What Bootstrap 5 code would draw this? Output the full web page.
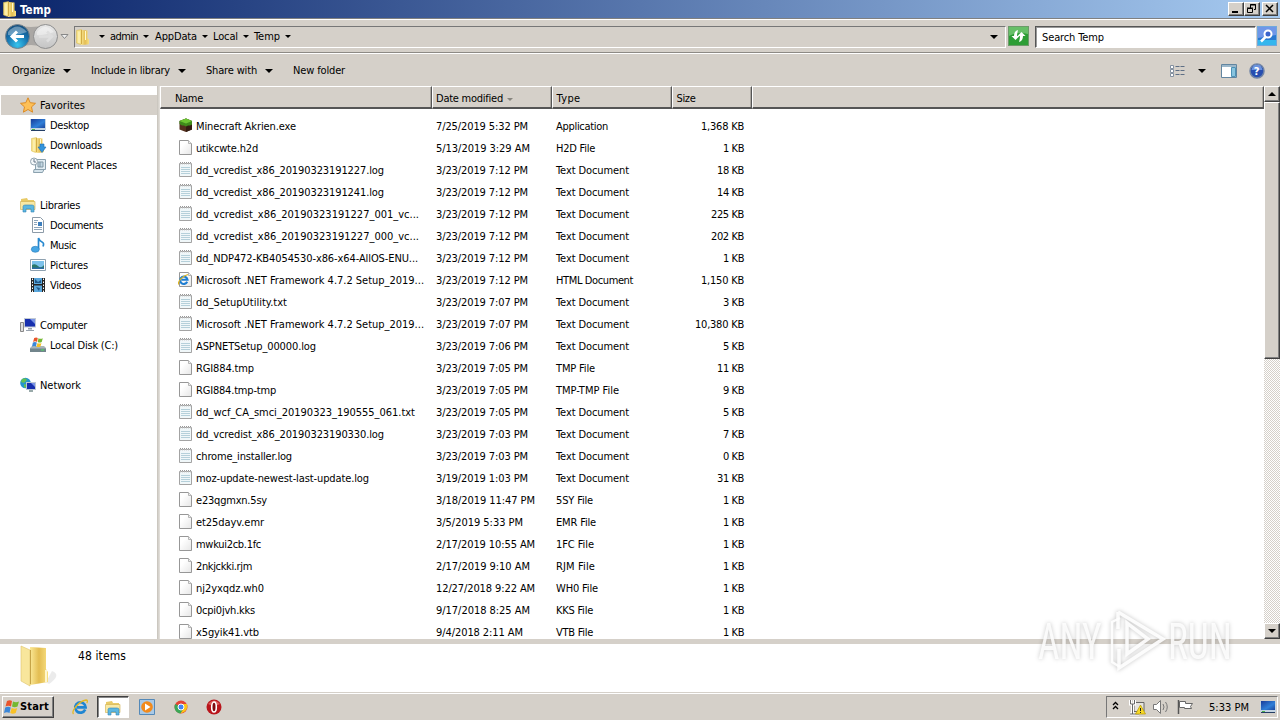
<!DOCTYPE html>
<html lang="en">
<head>
<meta charset="utf-8">
<title>Temp</title>
<link href="https://cdn.jsdelivr.net/npm/bootstrap@5.3.0/dist/css/bootstrap.min.css" rel="stylesheet">
<style>
:root{--face:#d5d0c9;--dark:#404040;--shade:#808080}
body{width:1280px;height:720px;overflow:hidden;background:var(--face);color:#000;font:11px/16px "DejaVu Sans Condensed","DejaVu Sans",sans-serif;font-stretch:condensed}
svg{display:block;flex:none;overflow:visible}
span{white-space:nowrap}
.titlebar{height:18px;background:linear-gradient(90deg,#0a246a,#a6caf0);color:#fff;padding:0 2px 0 2px}
.raised{background:var(--face);border:1px solid;border-color:#fff var(--dark) var(--dark) #fff;box-shadow:inset -1px -1px var(--shade)}
.winbtn{width:16px;height:14px}
.addressrow{height:36px;border-top:1px solid #808080;border-bottom:1px solid #fff;box-shadow:inset 0 1px #fff,inset 0 -1px #8d8a85;padding:7px 0 0 5px}
.sunk{height:22px;border:1px solid;border-color:#777 #fff #fff #777}
.searchbox{width:221px;background:#fff;border-color:#555 #fff #fff #555;box-shadow:inset 1px 1px #999}
.toolrow{height:32px}
.arr{width:0;height:0;border:4px solid transparent;border-top-color:#000;border-bottom:0;flex:none}
.arr.sm{border-width:3px 3px 0}
.treepane{width:157px;height:553px;background:#fff;padding-top:9px}
.treeitem{height:20px;padding-left:20px;gap:4px}
.treeitem.sub{padding-left:30px}
.treeitem.sel{background:var(--face);margin-left:1px;padding-left:19px}
.treeitem .fit,.filerow .fit{padding-top:2px}
.split{width:3px;background:linear-gradient(90deg,#c6c2ba,#e6e3de)}
.headrow{height:23px;width:1104px}
.headcell{height:23px;border-top:1px solid #fff;border-left:1px solid #fff;border-right:1px solid #555;border-bottom:2px solid #555;box-shadow:inset -1px 0 #aaa6a0;padding-left:4px;padding-top:4px;background:var(--face)}
.filerow{height:22px}
.cname{width:276px;padding-left:18px;gap:2px}
.cdate{width:120px}.ctype{width:120px}.csize{width:68px}
.vscroll{width:16px;height:553px;background:repeating-conic-gradient(#fff 0 25%,#d5d0c9 0 50%) 0 0/2px 2px}
.vbtn{height:16px}
.thumb{height:257px}
.band{height:5px;background:var(--face)}
.details{height:48px;background:#fff;padding-left:18px}
.taskbar{height:27px;border-top:1px solid #fff;box-shadow:0 -1px #d5d0c9;padding:2px 2px 0 2px;margin-top:1px}
.start{width:52px;height:22px;font-weight:700;padding-left:1px}
.taskon{width:32px;height:22px;background:#fff;border:1px solid;border-color:#404040 #fff #fff #404040;box-shadow:inset 1px 1px #888}
.tray{width:172px;height:22px;border:1px solid;border-color:#777 #fff #fff #777}
.mark-any{position:absolute;left:1037px;top:606px}
</style>
</head>
<body>
<svg width="0" height="0" class="position-absolute"><defs>
<linearGradient id="gy" x2="1"><stop offset="0" stop-color="#fbe896"/><stop offset=".5" stop-color="#e3bd52"/><stop offset="1" stop-color="#f8df82"/></linearGradient>
<radialGradient id="gb" cx=".5" cy=".85" r=".8"><stop offset="0" stop-color="#36c4ee"/><stop offset=".6" stop-color="#1670ac"/><stop offset="1" stop-color="#155080"/></radialGradient>
<linearGradient id="gg" x2="0" y2="1"><stop offset="0" stop-color="#e8e8e8"/><stop offset="1" stop-color="#c4c4c4"/></linearGradient>
<linearGradient id="gs" x2="1" y2="1"><stop offset="0" stop-color="#183b98"/><stop offset=".6" stop-color="#2f7fd8"/><stop offset="1" stop-color="#1b459c"/></linearGradient>
<linearGradient id="gp" x2="1" y2="1"><stop offset=".3" stop-color="#fff"/><stop offset="1" stop-color="#e6e6e6"/></linearGradient>
<symbol id="folder" viewBox="0 0 16 16"><path d="M1.500 1.500l5-1V14l-1 1.500-4-1.500z" fill="#f7e288" stroke="#d9b84e" stroke-width=".5"/><path d="M6.500 1l6 .5v8l1.500.5v5l-1.500.5-6.500.5z" fill="url(#gy)"/><path d="M6.500 1v14" stroke="#c99e35" stroke-width=".8"/><path d="M4 2.500V14M10.500 2v9" stroke="#fff8ce"/></symbol>
<symbol id="blank" viewBox="0 0 16 16"><path d="M1.500.5h9l3 3v11h-12z" fill="url(#gp)" stroke="#979797"/><path d="M10.500.5v3h3" fill="#eee" stroke="#b5b5b5"/></symbol>
<symbol id="text" viewBox="0 0 16 16"><path d="M1.500 1.500h12v13h-12z" fill="#f0f7f9" stroke="#a3a3a3"/><path d="M2 .5h11" stroke="#999" stroke-dasharray="1 1"/><path d="M2 2h11" stroke="#ccc" stroke-dasharray="1 1"/><path d="M3 5.500h9M3 7.500h9M3 9.500h9M3 11.500h9" stroke="#b5d0da"/></symbol>
<symbol id="ie" viewBox="0 0 16 16"><path d="M13.200 10.500A5.200 5.200 0 1 1 13.600 8.300H5" fill="none" stroke="#1f86d2" stroke-width="2.700"/><path d="M1.500 15C-1 12 7 2 14 1c2 0 1.500 2 .7 3" fill="none" stroke="#e3b824" stroke-width="1.300"/></symbol>
<symbol id="html" viewBox="0 0 16 16"><use href="#blank"/><path d="M9.200 9.800A3.700 3.700 0 1 1 9.500 7.700H3.500" fill="none" stroke="#1f7ed2" stroke-width="2.100"/><path d="M.8 12.500C-1 10 5 3.500 10 2.500" fill="none" stroke="#dfb520" stroke-width="1.200"/></symbol>
<symbol id="mc" viewBox="0 0 16 16"><path d="M1.500 3L8 .5l6 2.500v8.500L8 14 1.500 11.500z" fill="#54301e"/><path d="M8 7v7l6-2.500V5z" fill="#331c12"/><path d="M1.500 3L8 .5l6 2.500v3.500l-2 1H10L8 8.500 6 7.500H4L1.500 6z" fill="#3f8a1b"/><path d="M1.500 3L8 .5l6 2.500-6 2.500z" fill="#6dc532"/></symbol>
<symbol id="screen" viewBox="0 0 16 16"><path d="M0 2h16v11H0z" fill="#c4d4e2"/><path d="M1 2h14v9H1z" fill="url(#gs)"/><path d="M1 13.500h14" stroke="#243e65"/><path d="M2 12.500h3" stroke="#4bb04a"/></symbol>
<symbol id="lib" viewBox="0 0 16 16"><path d="M1 2l6-1 1 2h6v9H1z" fill="#e8ca67"/><path d="M.5 4.500h14.500v8H.5z" fill="#f8e9a5" stroke="#cfac4a" stroke-width=".6"/><path d="M3 15V9.500Q3 8 5 8h7q2 0 2 1.500V15h-3v-3H6v3z" fill="#5cb7e0" stroke="#3285b5" stroke-width=".6"/></symbol>
<symbol id="flag" viewBox="0 0 16 16"><path d="M3 2q3-1.500 5 0L7 7.500Q4.500 6 1.500 7.500z" fill="#e9542b"/><path d="M9 2.500q3 1.500 6 0l-1.500 5q-3 1.500-5.500 0z" fill="#75b832"/><path d="M1.200 8.500q3-1.500 5.500 0L5.500 14Q3 12.500 0 14z" fill="#3b87d8"/><path d="M7.700 9q3 1.500 5.500 0l-1.500 5q-3 1.500-5.500 0z" fill="#f8c126"/></symbol>
</defs></svg>

<header class="titlebar d-flex align-items-center">
 <svg width="16" height="16"><use href="#folder"/></svg><span class="fw-bold fit" style="margin-left:2px;padding-top:1px;font-size:11.5px" data-w="31">Temp</span>
 <div class="d-flex ms-auto">
  <div class="winbtn raised"><svg width="14" height="12"><path d="M3 9h6" stroke="#000" stroke-width="2"/></svg></div>
  <div class="winbtn raised"><svg width="14" height="12"><path d="M5.500 5V1.500h5v5H9M5 2h6M2.500 5.500h5v4h-5zM2 5h6" fill="none" stroke="#000"/></svg></div>
  <div class="winbtn raised" style="margin-left:2px"><svg width="14" height="12"><path d="M3 2l7 7M10 2l-7 7" stroke="#000" stroke-width="1.500"/></svg></div>
 </div>
</header>

<nav class="addressrow d-flex">
 <svg width="66" height="26" style="margin-top:-2px"><path d="M12 1Q26 5 40 1V24Q26 18 12 24" fill="#aaa7a4"/><circle cx="12.500" cy="12.500" r="12" fill="url(#gb)" stroke="#79848c"/><path d="M3 8Q12-3 22 8Q12 12 3 11z" fill="#fff" opacity=".35"/><path d="M19 12.500H8M12 7.500l-5 5 5 5" fill="none" stroke="#fff" stroke-width="3"/><circle cx="40.500" cy="12.500" r="12" fill="url(#gg)" stroke="#8e8e8e"/><path d="M32 8Q40-2 49 8Q40 12 32 11z" fill="#fff" opacity=".4"/><path d="M34 12.500h11M42 7.500l5 5-5 5" fill="none" stroke="#dedede" stroke-width="2.500"/><path d="M56 10.500h7l-3.500 4z" fill="#eee" stroke="#888"/></svg>
 <div class="sunk d-flex align-items-center" style="width:932px;margin-left:3px;padding-bottom:1px">
  <svg width="16" height="16"><use href="#folder"/></svg>
  <i class="arr sm" style="margin-left:8px"></i><span class="fit" style="margin-left:5px" data-w="28">admin</span>
  <i class="arr sm" style="margin-left:5px"></i><span class="fit" style="margin-left:6px" data-w="42">AppData</span>
  <i class="arr sm" style="margin-left:5px"></i><span class="fit" style="margin-left:5px" data-w="25">Local</span>
  <i class="arr sm" style="margin-left:5px"></i><span class="fit" style="margin-left:5px" data-w="26">Temp</span>
  <i class="arr sm" style="margin-left:5px"></i><i class="arr ms-auto" style="margin-right:7px"></i>
 </div>
 <svg width="22" height="22" style="margin-left:2px"><rect x=".5" y=".5" width="20" height="19" fill="#2d9d35" stroke="#6c9a6a"/><path d="M1 1h19v7Q10 5 1 10z" fill="#8ed68b" opacity=".6"/><path d="M10 4Q6 5 6 10H3.500L7.500 14l4-4H9q0-2 1-6M11 16q4-1 4-6h2.500L13.500 6l-4 4H12q0 3-1 6" fill="#fff"/></svg>
 <div class="sunk searchbox" style="margin-left:5px;padding:3px 0 0 6px"><span class="fit" data-w="62">Search Temp</span></div>
 <svg width="20" height="21" style="margin-left:1px"><rect x=".5" y=".5" width="19" height="19" fill="#2878d0" stroke="#6fa8dc"/><path d="M1 1h18v8L1 12z" fill="#6f96e8"/><path d="M1 14h18v5H1z" fill="#35b6ed"/><circle cx="11" cy="8" r="3.500" fill="#3b64cc" stroke="#fff" stroke-width="2"/><path d="M8.500 11L4 15.500" stroke="#fff" stroke-width="2.500"/></svg>
</nav>

<div class="toolrow d-flex align-items-center" style="padding:1px 0 0 12px">
 <span class="fit" data-w="43">Organize</span><i class="arr" style="margin-left:8px"></i>
 <span class="fit" style="margin-left:20px" data-w="79">Include in library</span><i class="arr" style="margin-left:8px"></i>
 <span class="fit" style="margin-left:20px" data-w="51">Share with</span><i class="arr" style="margin-left:8px"></i>
 <span class="fit" style="margin-left:20px" data-w="52">New folder</span>
 <svg class="ms-auto" width="110" height="20"><g fill="#fff" stroke="#8491a0"><path d="M.5 4.500h3v3h-3zM.5 8.500h3v3h-3zM.5 12.500h3v3h-3z"/><path d="M5.500 5.500h9M5.500 9.500h9M5.500 13.500h9" stroke-dasharray="4 1" stroke="#5e6f85"/></g><path d="M28 8h8l-4 4z"/><path d="M51.500 3.500h15v13h-15z" fill="#fff" stroke="#6185a0"/><path d="M52 5h14" stroke="#9bb7ca" stroke-width="2"/><path d="M61.500 6.500h4v9h-4z" fill="#88c4df" stroke="#4c91b5"/><circle cx="87" cy="10" r="7" fill="#274eb0" stroke="#7084a6" stroke-width="1.500"/><path d="M81.500 9Q83 3 87 4q4-1 5.500 5z" fill="#6b93de"/><text x="83.800" y="14" font-size="11" font-weight="700" fill="#fff">?</text></svg>
</div>

<main class="d-flex bg-white" style="height:553px">
 <aside class="treepane" id="tree"></aside><div class="split"></div>
 <section class="overflow-hidden" style="width:1104px">
  <div class="headrow d-flex">
   <div class="headcell" style="width:271.500px;padding-left:14px"><span class="fit" data-w="28">Name</span></div>
   <div class="headcell d-flex" style="width:120px;padding-left:3.500px"><span class="fit" data-w="67">Date modified</span><i class="arr sm" style="margin:7px 0 0 4px;border-top-color:#88857f"></i></div>
   <div class="headcell" style="width:120px"><span class="fit" data-w="24">Type</span></div>
   <div class="headcell" style="width:80px"><span class="fit" data-w="19">Size</span></div>
   <div class="headcell flex-fill"></div>
  </div>
  <div id="files" style="padding-top:6px"></div>
 </section>
 <div class="vscroll"><div class="vbtn raised"><svg width="14" height="14"><path d="M3 9h8L7 5z"/></svg></div><div class="thumb raised"></div><div class="vbtn raised" style="margin-top:264px"><svg width="14" height="14"><path d="M3 5h8L7 9z"/></svg></div></div>
</main>
<div class="band"></div>
<footer class="details d-flex">
 <svg width="42" height="44"><path d="M28 38L34 27q10 4-3 13z" fill="#ddd" opacity=".6"/><path d="M12 3l16 1v21l2 3v10l-18 3z" fill="url(#gy)"/><path d="M3 2l9 4v36L3 37z" fill="#f8e69c" stroke="#dec36d" stroke-width=".6"/><path d="M12.500 6v34" stroke="#c6a448"/><path d="M28 26v12" stroke="#fff7d0" stroke-width="2"/></svg>
 <span class="fit" style="margin:4px 0 0 18px;font-size:12px" data-w="48">48 items</span>
</footer>
<div class="taskbar d-flex">
 <div class="start raised d-flex align-items-center"><svg width="16" height="16"><use href="#flag"/></svg><span class="fit" data-w="29">Start</span></div>
 <svg width="16" height="16" style="margin:3px 0 0 18px"><use href="#ie"/></svg>
 <div class="taskon d-flex justify-content-center" style="margin-left:9px;padding-top:3px"><svg width="16" height="16"><use href="#lib"/></svg></div>
 <svg width="16" height="16" style="margin:3px 0 0 10px"><path d="M.5.5h15v15H.5z" fill="#a9c9e6" stroke="#5489b8"/><circle cx="8" cy="8" r="5.800" fill="#f28a1c"/><path d="M6 4.500v7L11.500 8z" fill="#fff"/></svg>
 <svg width="16" height="16" style="margin:3px 0 0 18px"><circle cx="8" cy="8" r="6.500" fill="#e44435"/><path d="M2.200 5A6.500 6.500 0 0 0 7.500 14.500L11 9 8 8z" fill="#3aa757"/><path d="M8 5h6q2 7-6.500 9.500L11 9z" fill="#fbc618"/><circle cx="8" cy="8" r="3" fill="#4285f4" stroke="#fff"/></svg>
 <svg width="16" height="16" style="margin:3px 0 0 17px"><circle cx="8" cy="8" r="7.500" fill="#b9151b"/><path d="M2 5Q8-2 14 5 8 8 2 5z" fill="#ec7a75" opacity=".7"/><ellipse cx="8" cy="8" rx="2.300" ry="5" fill="#7f0a0e" stroke="#fff" stroke-width="1.600"/></svg>
 <div class="tray d-flex ms-auto align-items-center">
  <svg width="96" height="20"><path d="M6 8l2.500-2.500L11 8M6 12l2.500-2.500L11 12" fill="none" stroke="#000" stroke-width="1.300"/><path d="M27 5.500h10v9H27z" fill="#e6e4df" stroke="#666"/><path d="M23.500 3v4h4V3M25.500 7v10M23 17h9" stroke="#fff" stroke-width="3" fill="none"/><path d="M23.500 3v4h4V3M25.500 7v10M23 17h9" stroke="#666" fill="none"/><path d="M33.500 8l5 9h-10z" fill="#f7d927" stroke="#b69605" stroke-width=".7"/><path d="M33.500 11v3M33.500 15v1" stroke="#222"/><path d="M46.500 7.500h3l4-4v13l-4-4h-3z" fill="#fff" stroke="#777"/><path d="M56 7q2 3 0 6M58.500 5q3.500 5 0 10" fill="none" stroke="#777"/><path d="M71.500 3v14" stroke="#555" stroke-width="1.500"/><path d="M72.500 4.500h6v2h7l-2 3 1 2h-7v-1h-5z" fill="#fff" stroke="#666"/></svg>
  <span class="fit" style="margin-left:6px;padding-top:1px" data-w="40">5:33 PM</span><svg width="16" height="16" style="margin-left:11px"><use href="#screen"/></svg>
 </div>
</div>

<svg class="mark-any" width="200" height="68" style="filter:drop-shadow(0 0 2px rgba(0,0,0,.26))" fill="none" stroke="#fff" stroke-opacity=".9" stroke-width="3.500">
 <g fill="#fff" fill-opacity=".85" stroke="none" font-family="Roboto,sans-serif" font-size="37"><text transform="translate(1 53) scale(.87 1.350)" textLength="73" lengthAdjust="spacingAndGlyphs">ANY</text><text transform="translate(131 53) scale(.84 1.350)" textLength="76" lengthAdjust="spacingAndGlyphs">RUN</text></g>
 <path d="M81 6L126 33 82 62V43M81 6V23"/><path d="M90 17v31l21-15z"/><path d="M83 12l-8 4v40l8 5" stroke-width="2.500"/>
</svg>

<script>
const ic={
star:'<path d="M8 .8l2.200 4.900 5.300.6-4 3.600 1.100 5.300L8 12.500l-4.600 2.700 1.100-5.300-4-3.600 5.300-.6z" fill="#fdc057" stroke="#dc8b25"/>',
desktop:'<use href="#screen"/>',
down:'<use href="#folder"/><path d="M10 7h4v3h2l-4 5.500L8 10h2z" fill="#3294dd" stroke="#1e6cae" stroke-width=".6"/>',
recent:'<path d="M5.500 2.500h10v10h-10z" fill="#e2edf3" stroke="#8ba1ae"/><path d="M8 5h5v5H8zM10 5v5" fill="#c3d8e4" stroke="#8096a3"/><path d="M4 12.500h10l-1.500 3h-9z" fill="#d5e3eb" stroke="#8ba1ae"/><circle cx="4" cy="4.500" r="3.500" fill="#f3f7f9" stroke="#94a5b0"/><path d="M4 2v3h2" fill="none" stroke="#678"/>',
lib:'<use href="#lib"/>',
doc:'<path d="M2.500.5h8l3 3v12h-11z" fill="#fff" stroke="#8d9ba8"/><path d="M4 3.500h4M4 5.500h3M4 7.500h3M4 10.500h8M4 12.500h8" stroke="#8fa6bb"/><path d="M8 5h4v4H8z" fill="#3c7ebd"/>',
music:'<path d="M8.500 12V1q1 3 3.500 4t1 4.500" fill="none" stroke="#2788cf" stroke-width="1.700"/><ellipse cx="5.300" cy="12.300" rx="4" ry="3" fill="#46a6e4" stroke="#2479b9" stroke-width=".6"/>',
pic:'<path d="M.5 2.500h15v11H.5z" fill="#fff" stroke="#8ea1b0"/><path d="M2 4h12v8H2z" fill="#7dc2eb"/><path d="M2 8q3-2 6 1t6-1v4H2z" fill="#2b796b"/><path d="M2 10.500h12V12H2z" fill="#2d6ca6"/>',
video:'<path d="M1 1h14v14H1z" fill="#252525"/><path d="M4 1h8v6H4zM4 8.500h8V15H4z" fill="#5aa7dc"/><path d="M5 2l3 3 3-2v3H5zM6 10l4 1-1 3z" fill="#1f5788"/><path d="M2.500 1.500V15M13.500 1.500V15" stroke="#fff" stroke-dasharray="1.500 1.500"/>',
pc:'<path d="M.5 5.500h3v9h-3z" fill="#ddd" stroke="#888"/><path d="M4 1h12v9.500H4z" fill="#c1c9d4"/><path d="M5 2h10v7.500H5z" fill="#172fae"/><path d="M10 2h5v5z" fill="#7893e6"/><path d="M8 11h4v1.500H8zM6 13h8v1H6z" fill="#98a2ae"/>',
disk:'<path d="M2 9h12l2 2v4H0v-4z" fill="#a9b5b9"/><path d="M0 11.500h16V15H0z" fill="#72858c"/><path d="M11 13h3" stroke="#4de063"/><g transform="translate(2 -.5) scale(.72)"><use href="#flag" width="16" height="16"/></g>',
net:'<circle cx="5.500" cy="6" r="5.300" fill="#2395cd"/><path d="M2 2q4-2 5 1L4 6 1 5zM4 7l3 1-1 3-2-1z" fill="#61bf55"/><path d="M6 5h10v8H6z" fill="#bcc7d5"/><path d="M7 6h8v6H7z" fill="#162fad"/><path d="M11 6h4v4z" fill="#7892e6"/><path d="M9 13h4v2H9z" fill="#9aa"/>'};
const tree=[['star','Favorites',45,'sel'],['desktop','Desktop',39,'sub'],['down','Downloads',52,'sub'],['recent','Recent Places',67,'sub'],0,
['lib','Libraries',40,''],['doc','Documents',53,'sub'],['music','Music',26,'sub'],['pic','Pictures',38,'sub'],['video','Videos',31,'sub'],0,
['pc','Computer',47,''],['disk','Local Disk (C:)',68,'sub'],0,['net','Network',41,'']];
document.getElementById('tree').innerHTML=tree.map(t=>t?`<div class="treeitem d-flex align-items-center ${t[3]}"><svg width="16" height="16">${ic[t[0]]}</svg><span class="fit" data-w="${t[2]}">${t[1]}</span></div>`:'<div class="treeitem"></div>').join('');
const T='Text Document',v='3/23/2019 ';
const files=[['mc','Minecraft Akrien.exe',100,'7/25/2019 5:32 PM','Application','1,368',52],['blank','utikcwte.h2d',62,'5/13/2019 3:29 AM','H2D File','1',39],
['text','dd_vcredist_x86_20190323191227.log',188,v+'7:12 PM',T,'18',73],['text','dd_vcredist_x86_20190323191241.log',188,v+'7:12 PM',T,'14',73],
['text','dd_vcredist_x86_20190323191227_001_vc...',223,v+'7:12 PM',T,'225',73],['text','dd_vcredist_x86_20190323191227_000_vc...',223,v+'7:12 PM',T,'202',73],
['text','dd_NDP472-KB4054530-x86-x64-AllOS-ENU...',222,v+'7:12 PM',T,'1',73],['html','Microsoft .NET Framework 4.7.2 Setup_2019...',228,v+'7:12 PM','HTML Document','1,150',77],
['text','dd_SetupUtility.txt',91,v+'7:07 PM',T,'3',73],['text','Microsoft .NET Framework 4.7.2 Setup_2019...',228,v+'7:07 PM',T,'10,380',73],
['text','ASPNETSetup_00000.log',120,v+'7:06 PM',T,'5',73],['blank','RGI884.tmp',58,v+'7:05 PM','TMP File','11',39],['blank','RGI884.tmp-tmp',80,v+'7:05 PM','TMP-TMP File','9',63],
['text','dd_wcf_CA_smci_20190323_190555_061.txt',219,v+'7:05 PM',T,'5',73],['text','dd_vcredist_x86_20190323190330.log',188,v+'7:03 PM',T,'7',73],
['text','chrome_installer.log',96,v+'7:03 PM',T,'0',73],['text','moz-update-newest-last-update.log',173,'3/19/2019 1:03 PM',T,'31',73],
['blank','e23qgmxn.5sy',71,'3/18/2019 11:47 PM','5SY File','1',37],['blank','et25dayv.emr',68,'3/5/2019 5:33 PM','EMR File','1',40],['blank','mwkui2cb.1fc',65,'2/17/2019 10:55 AM','1FC File','1',38],
['blank','2nkjckki.rjm',56,'2/17/2019 9:10 AM','RJM File','1',39],['blank','nj2yxqdz.wh0',68,'12/27/2018 9:22 AM','WH0 File','1',42],['blank','0cpi0jvh.kks',59,'9/17/2018 8:25 AM','KKS File','1',37],['blank','x5gyik41.vtb',63,'9/4/2018 2:11 AM','VTB File','1',37]];
const dw=s=>s.length===18?99:s.length===16?87:s.endsWith('AM')?94:92;
document.getElementById('files').innerHTML=files.map(f=>`<div class="filerow d-flex align-items-center"><div class="cname d-flex align-items-center"><svg width="16" height="16"><use href="#${f[0]}"/></svg><span class="fit" data-w="${f[2]}">${f[1]}</span></div><div class="cdate d-flex"><span class="fit" data-w="${dw(f[3])}">${f[3]}</span></div><div class="ctype d-flex"><span class="fit" data-w="${f[6]}">${f[4]}</span></div><div class="csize d-flex justify-content-end"><span class="fit" data-w="${15+6*f[5].replace(',','').length+(f[5].includes(',')?4:0)}">${f[5]} KB</span></div></div>`).join('');
// adjust tracking so every label takes its own width
document.querySelectorAll('.fit').forEach(e=>{e.style.letterSpacing='0px';const d=(e.dataset.w-e.getBoundingClientRect().width)/e.textContent.length;e.style.letterSpacing=d.toFixed(3)+'px'});
</script>
<script src="https://cdn.jsdelivr.net/npm/bootstrap@5.3.0/dist/js/bootstrap.bundle.min.js"></script>
</body>
</html>
